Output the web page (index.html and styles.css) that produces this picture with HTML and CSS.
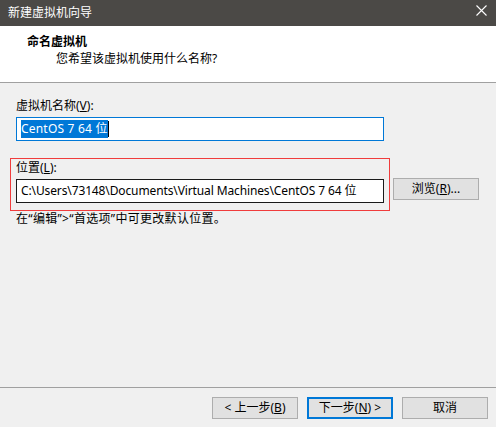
FILE: index.html
```html
<!DOCTYPE html>
<html lang="zh-CN">
<head>
<meta charset="utf-8">
<title>新建虚拟机向导</title>
<link rel="stylesheet" href="styles.css">
</head>
<body>
<div class="window">
  <div class="titlebar">
    <span class="title">新建虚拟机向导</span>
    <svg class="close" width="11" height="11" viewBox="0 0 11 11"><path d="M0.5 0.5 L10.5 10.5 M10.5 0.5 L0.5 10.5" stroke="#ffffff" stroke-width="1.1" fill="none"/></svg>
  </div>
  <div class="header">
    <div class="h-title">命名虚拟机</div>
    <div class="h-sub">您希望该虚拟机使用什么名称?</div>
  </div>
  <div class="content">
    <div class="label">虚拟机名称(<u>V</u>):</div>
    <div class="input focused"><span class="sel">CentOS 7 64 位</span><span class="caret"></span></div>
    <div class="loc-row">
      <div class="highlight">
        <div class="label">位置(<u>L</u>):</div>
        <div class="input dark">C:\Users\73148\Documents\Virtual Machines\CentOS 7 64 位</div>
      </div>
      <div class="btn browse">浏览(<u>R</u>)...</div>
    </div>
    <div class="hint">在“编辑”&gt;“首选项”中可更改默认位置。</div>
  </div>
  <div class="footer">
    <div class="btn">&lt; 上一步(<u>B</u>)</div>
    <div class="btn primary">下一步(<u>N</u>) &gt;</div>
    <div class="btn">取消</div>
  </div>
</div>
</body>
</html>
```

FILE: styles.css
```css
* { box-sizing: border-box; }
html, body { margin: 0; padding: 0; }
body {
  width: 496px;
  height: 427px;
  overflow: hidden;
  font-family: "Noto Sans", "Noto Sans CJK SC", sans-serif;
  font-size: 12px;
  color: #000;
  background: #f0f0f0;
}
.window {
  width: 496px;
  height: 427px;
  display: flex;
  flex-direction: column;
  background: #f0f0f0;
}
.titlebar {
  height: 26px;
  background: #4b4946;
  color: #ffffff;
  display: flex;
  align-items: center;
  padding: 0 9px 0 8px;
  justify-content: space-between;
}
.title { line-height: 16px; margin-top: -1px; }
.close { margin-top: -6px; }
.header {
  height: 57px;
  background: #ffffff;
  border-bottom: 1px solid #a0a0a0;
  padding: 7px 0 0 27px;
}
.h-title { font-weight: bold; line-height: 17px; }
.h-sub { line-height: 17px; padding-left: 29px; margin-top: 0; }
.content {
  flex: 1;
  padding: 15px 0 0 16px;
}
.label { line-height: 16px; }
u { text-decoration: underline; text-underline-offset: 1px; }
.input {
  width: 368px;
  height: 24px;
  background: #ffffff;
  border: 1px solid #7a7a7a;
  margin-top: 3px;
  display: flex;
  align-items: center;
  padding-left: 4px;
  white-space: nowrap;
  line-height: 16px;
}
.input.focused { border-color: #0078d7; }
.input.dark { border-color: #1a1a1a; letter-spacing: -0.12px; }
.sel {
  background: #0078d7;
  color: #ffffff;
  padding: 1px 0;
  line-height: 16px;
  letter-spacing: 0.2px;
}
.caret { width: 1px; height: 16px; background: #000; }
.loc-row {
  display: flex;
  align-items: flex-start;
  margin-top: 17px;
  margin-left: -6px;
}
.highlight {
  border: 1px solid #f03c3c;
  padding: 1px 5px 7px 5px;
  width: 380px;
}
.btn {
  width: 86px;
  height: 22px;
  background: #e1e1e1;
  border: 1px solid #adadad;
  display: flex;
  align-items: center;
  justify-content: center;
  line-height: 16px;
  white-space: nowrap;
}
.browse { margin-left: 3px; margin-top: 20px; }
.hint {
  line-height: 16px;
  margin-top: 0;
  letter-spacing: 0.3px;
}
.footer {
  height: 40px;
  border-top: 1px solid #a0a0a0;
  display: flex;
  justify-content: flex-end;
  align-items: flex-start;
  gap: 9px;
  padding: 9px 8px 0 0;
}
.btn.primary { border: 2px solid #0078d7; }
```
